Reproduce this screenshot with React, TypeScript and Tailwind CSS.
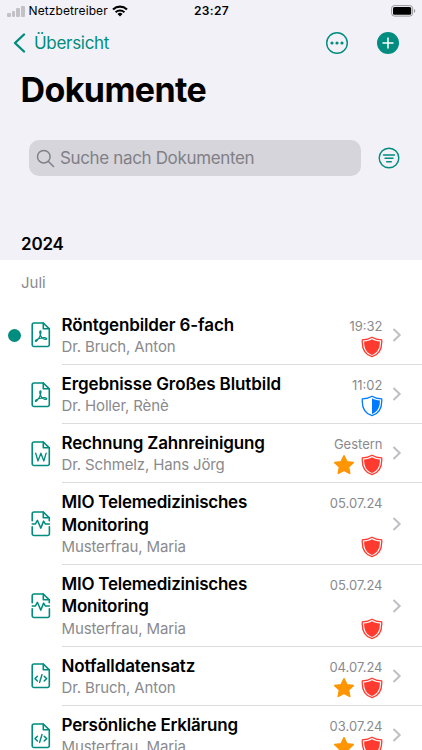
import React from 'react';

type DocType = 'pdf' | 'word' | 'mio' | 'xml';
type Protection = 'full' | 'half';

interface DocumentItem {
  id: number;
  title: string[];
  author: string;
  date: string;
  type: DocType;
  protection: Protection;
  favorite?: boolean;
  unread?: boolean;
  titleClass: string;
}

const DOCUMENTS: DocumentItem[] = [
  { id: 1, title: ['Röntgenbilder 6-fach'], author: 'Dr. Bruch, Anton', date: '19:32', type: 'pdf', protection: 'full', unread: true, titleClass: 'tracking-[-0.12px]' },
  { id: 2, title: ['Ergebnisse Großes Blutbild'], author: 'Dr. Holler, Rènè', date: '11:02', type: 'pdf', protection: 'half', titleClass: 'tracking-[-0.1px]' },
  { id: 3, title: ['Rechnung Zahnreinigung'], author: 'Dr. Schmelz, Hans Jörg', date: 'Gestern', type: 'word', protection: 'full', favorite: true, titleClass: 'tracking-[-0.17px]' },
  { id: 4, title: ['MIO Telemedizinisches', 'Monitoring'], author: 'Musterfrau, Maria', date: '05.07.24', type: 'mio', protection: 'full', titleClass: 'tracking-[-0.24px]' },
  { id: 5, title: ['MIO Telemedizinisches', 'Monitoring'], author: 'Musterfrau, Maria', date: '05.07.24', type: 'mio', protection: 'full', titleClass: 'tracking-[-0.24px]' },
  { id: 6, title: ['Notfalldatensatz'], author: 'Dr. Bruch, Anton', date: '04.07.24', type: 'xml', protection: 'full', favorite: true, titleClass: 'tracking-[-0.08px]' },
  { id: 7, title: ['Persönliche Erklärung'], author: 'Musterfrau, Maria', date: '03.07.24', type: 'xml', protection: 'full', favorite: true, titleClass: 'tracking-[-0.2px]' },
];

const FileIcon: React.FC<{ type: DocType }> = ({ type }) => (
  <svg width="20" height="26" viewBox="0 0 20 26" fill="none" stroke="#008c7e" strokeWidth="1.6" strokeLinejoin="round" strokeLinecap="round">
    {type === 'mio' ? (
      <>
        <path d="M1.2 9.8V2.8a1.8 1.8 0 0 1 1.8-1.8h9.3l6 5.8v3" />
        <path d="M1.2 15.8v6.9a1.8 1.8 0 0 0 1.8 1.8h13.6a1.8 1.8 0 0 0 1.8-1.8v-6.9" />
        <path d="M1.2 12.9h3.2l2-3.6 3.4 7.8 2.8-7 1.7 2.8h4" strokeWidth="1.5" />
      </>
    ) : (
      <path d="M3 1h9.3l6 5.8v15.9a1.8 1.8 0 0 1-1.8 1.8H3a1.8 1.8 0 0 1-1.8-1.8V2.8A1.8 1.8 0 0 1 3 1z" />
    )}
    <path d="M12.3 1v5.8h6" />
    {type === 'pdf' && (
      <path d="M9.4 8.8c-1.2.2-.6 2.8.2 4.6.9 2 2.9 4 5.4 4 1.6-.2.7-1.9-2.4-1.700-3 .2-6.2 1.300-7.600 2.300-1.400 1.300-.1 2 1 .7 1.600-1.800 3.400-5 3.900-7.600.2-1.400.1-2.400-.5-2.300z" strokeWidth="1.2" />
    )}
    {type === 'word' && <path d="M4.7 12.2l2.3 7.8 2.9-7.8 2.9 7.8 2.3-7.8" strokeWidth="1.3" />}
    {type === 'xml' && <path d="M6.4 13.2l-2.4 2.4 2.4 2.4M13.2 13.2l2.4 2.4-2.4 2.4M11 11.6l-2.4 7.8" strokeWidth="1.5" />}
  </svg>
);

const ShieldIcon: React.FC<{ variant: Protection }> = ({ variant }) => {
  const color = variant === 'full' ? '#ff3b30' : '#007aff';
  return (
    <svg width="22" height="22" viewBox="0 0 22 22">
      <path
        d="M11 1.2C8.4 2.9 4.6 3.8 1.3 3.9 0.8 11.5 3.5 18.4 11 20.7 18.5 18.4 21.2 11.5 20.7 3.9 17.4 3.8 13.6 2.9 11 1.2z"
        fill="none"
        stroke={color}
        strokeWidth="1.3"
        strokeLinejoin="round"
      />
      {variant === 'full' ? (
        <path d="M11 3.2C8.7 4.5 6 5.3 3.1 5.5 3 11.7 5.2 16.9 11 18.9 16.8 16.9 19 11.7 18.9 5.5 16 5.3 13.3 4.5 11 3.2z" fill={color} />
      ) : (
        <path d="M11 3.2V18.9C16.8 16.9 19 11.7 18.9 5.5 16 5.3 13.3 4.5 11 3.2z" fill={color} />
      )}
    </svg>
  );
};

const StarIcon = () => (
  <svg width="22" height="22" viewBox="0 0 22 22" fill="#ff9500" stroke="#ff9500" strokeWidth="1.6" strokeLinejoin="round">
    <path d="M11 1.800l2.800 5.900 6.400.9-4.700 4.400 1.200 6.400L11 16.300l-5.700 3.100 1.200-6.400-4.700-4.400 6.400-.9z" />
  </svg>
);

const StatusBar = () => (
  <div className="grid h-[22px] grid-cols-3 items-center pl-[7px] pr-[6px]">
    <div className="flex items-center">
      <div className="mr-[4px] flex items-end gap-[1.2px]">
        <span className="h-[4px] w-[3.5px] rounded-[1px] bg-[#c2c1c6]" />
        <span className="h-[6px] w-[3.5px] rounded-[1px] bg-[#c2c1c6]" />
        <span className="h-[8.5px] w-[3.5px] rounded-[1px] bg-[#c2c1c6]" />
        <span className="h-[11px] w-[3.5px] rounded-[1px] bg-[#c2c1c6]" />
      </div>
      <span className="text-[12px] tracking-[0.1px] whitespace-nowrap">Netzbetreiber</span>
      <svg className="ml-[4.5px] shrink-0" width="16" height="12" viewBox="0 0 16 12" fill="none" stroke="#000" strokeWidth="2.1">
        <path d="M1 4.4a10.2 10.2 0 0 1 14 0" />
        <path d="M3.6 7.2a6.4 6.4 0 0 1 8.8 0" />
        <path d="M8 11.4L5.5 8.9a3.6 3.6 0 0 1 5 0z" fill="#000" stroke="none" />
      </svg>
    </div>
    <span className="text-center text-[12px] font-semibold tracking-[0.3px]">23:27</span>
    <svg className="justify-self-end" width="25" height="12" viewBox="0 0 25 12">
      <rect x="0.6" y="0.6" width="21" height="10.5" rx="2.8" fill="none" stroke="#97979b" />
      <rect x="2" y="2" width="18.2" height="7.7" rx="1.5" fill="#000" />
      <path d="M23 4v3.8c.8-.3 1.2-1 1.2-1.9S23.8 4.3 23 4z" fill="#97979b" />
    </svg>
  </div>
);

const DocumentRow: React.FC<{ doc: DocumentItem }> = ({ doc }) => (
  <li className="flex">
    <div className="flex w-[61.5px] shrink-0 items-center pl-[8px]">
      <span className={doc.unread ? 'size-[13px] rounded-full bg-[#008c7e]' : 'size-[13px]'} />
      <span className={doc.type === 'pdf' ? 'ml-[9.5px]' : 'ml-[10px]'}><FileIcon type={doc.type} /></span>
    </div>
    <div className="flex flex-1 items-center border-b border-[#dcdcdf] pt-[7.8px] pb-[5.4px]">
      <div className="flex-1 self-start">
        <h3 className={`text-[17px] leading-[22.5px] font-semibold whitespace-nowrap text-black ${doc.titleClass}`}>
          {doc.title.map(line => <span key={line} className="block">{line}</span>)}
        </h3>
        <p className="text-[15px] leading-[22.5px] tracking-[-0.14px] whitespace-nowrap text-[#8a8a8e]">{doc.author}</p>
      </div>
      <div className="flex flex-col items-end justify-between self-stretch pt-[1px] pb-[0.5px]">
        <span className="pr-[0.5px] text-[13px] leading-[22px] text-[#8a8a8e]">{doc.date}</span>
        <div className="-mt-px flex gap-[6.5px]">
          {doc.favorite && <StarIcon />}
          <ShieldIcon variant={doc.protection} />
        </div>
      </div>
      <svg className="mr-[20px] mb-[2px] ml-[9px]" width="10" height="14" viewBox="0 0 10 14" fill="none" stroke="#bfbfc3" strokeWidth="2">
        <path d="M1.5 1l6.2 6-6.2 6" />
      </svg>
    </div>
  </li>
);

const App: React.FC = () => {
  return (
    <div className="h-[750px] w-[422px] overflow-hidden bg-white font-['Inter','Liberation_Sans',sans-serif] text-black">
      <header className="h-[260px] bg-[#f2f1f7]">
        <StatusBar />
        <nav className="flex h-[42px] items-center pr-[22px] pl-[13px] text-[#008c7e]">
          <button className="flex items-center">
            <svg width="13" height="20" viewBox="0 0 13 20" fill="none" stroke="currentColor" strokeWidth="2.4" strokeLinecap="round" strokeLinejoin="round">
              <path d="M11 1.5L2 10l9 8.5" />
            </svg>
            <span className="ml-[8px] pt-[2px] text-[17px] tracking-[-0.3px]">Übersicht</span>
          </button>
          <svg className="ml-auto" width="24" height="24" viewBox="0 0 24 24" fill="currentColor">
            <circle cx="12" cy="12" r="10.3" fill="none" stroke="currentColor" strokeWidth="1.4" />
            <circle cx="7" cy="12" r="1.6" />
            <circle cx="12" cy="12" r="1.6" />
            <circle cx="17" cy="12" r="1.6" />
          </svg>
          <svg className="ml-[27px]" width="24" height="24" viewBox="0 0 24 24">
            <circle cx="12" cy="12" r="11" fill="currentColor" />
            <path d="M12 7v10M7 12h10" stroke="#fff" strokeWidth="1.5" strokeLinecap="round" />
          </svg>
        </nav>
        <h1 className="pl-[20.5px] text-[34px] leading-[52px] font-bold tracking-[-0.6px]">Dokumente</h1>
        <div className="mt-[24px] flex items-center pr-[22px] pl-[29px]">
          <div className="flex h-[36px] w-[332px] items-center rounded-[10px] bg-[#d6d5db] pl-[7px] text-[#808086]">
            <svg width="19" height="19" viewBox="0 0 19 19" fill="none" stroke="currentColor" strokeWidth="1.5" strokeLinecap="round">
              <circle cx="7.8" cy="7.7" r="6.3" />
              <path d="M12.5 12.5l5 5" />
            </svg>
            <span className="ml-[5px] pt-[2px] text-[17px] tracking-[-0.35px]">Suche nach Dokumenten</span>
          </div>
          <svg className="ml-auto" width="22" height="22" viewBox="0 0 22 22" fill="none" stroke="#008c7e" strokeWidth="1.4" strokeLinecap="round">
            <circle cx="11" cy="11" r="9.8" />
            <path d="M5.5 8h11M7 11.3h8M8.7 14.7h4.6" />
          </svg>
        </div>
        <h2 className="mt-[56px] pl-[21px] text-[17px] leading-[24px] font-semibold tracking-[-0.2px]">2024</h2>
      </header>
      <main>
        <h4 className="h-[45.8px] pl-[21px] text-[15px] leading-[45px] text-[#8a8a8e]">Juli</h4>
        <ul>
          {DOCUMENTS.map(doc => <DocumentRow key={doc.id} doc={doc} />)}
        </ul>
      </main>
    </div>
  );
};

export default App;
